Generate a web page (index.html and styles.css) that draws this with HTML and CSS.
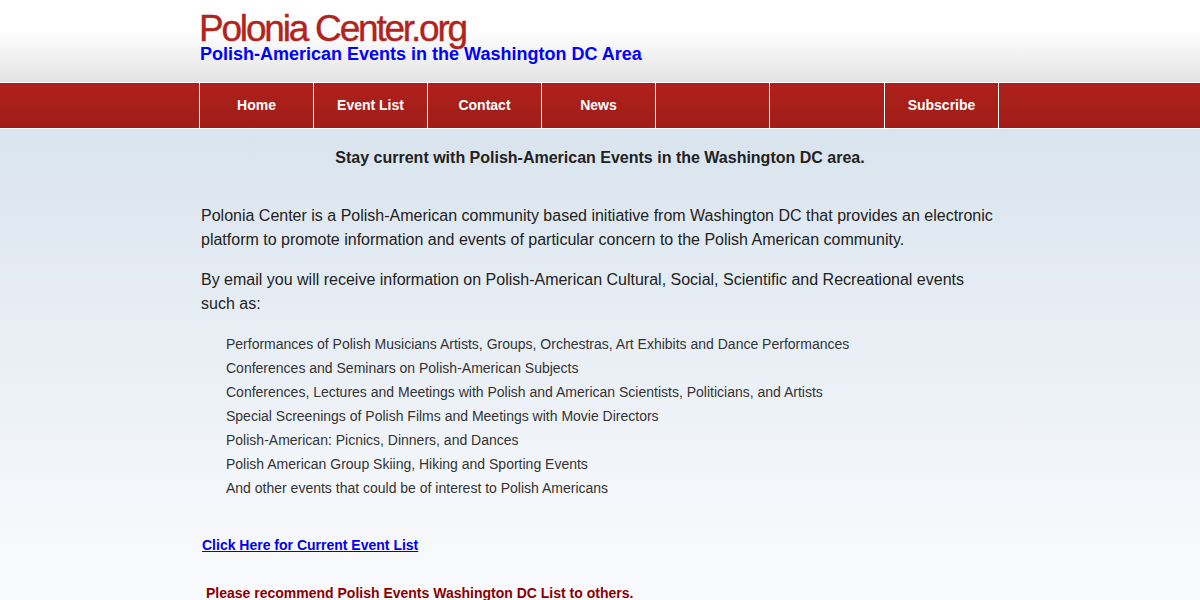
FILE: index.html
```html
<!DOCTYPE html>
<html lang="en">
<head>
<meta charset="utf-8">
<title>Polonia Center.org</title>
<link rel="stylesheet" href="styles.css">
</head>
<body>
<header class="site-header">
  <div class="wrap">
    <div class="logo">Polonia Center.org</div>
    <div class="tagline">Polish-American Events in the Washington DC Area</div>
  </div>
</header>
<nav class="nav">
  <ul class="wrap nav-list">
    <li><a href="#">Home</a></li>
    <li><a href="#">Event List</a></li>
    <li><a href="#">Contact</a></li>
    <li><a href="#">News</a></li>
    <li><a href="#"></a></li>
    <li class="wide"><a href="#"></a></li>
    <li><a href="#">Subscribe</a></li>
  </ul>
</nav>
<main class="wrap content">
  <h2 class="lead">Stay current with Polish-American Events in the Washington DC area.</h2>
  <p class="intro">Polonia Center is a Polish-American community based initiative from Washington DC that provides an electronic platform to promote information and events of particular concern to the Polish American community.</p>
  <p class="intro">By email you will receive information on Polish-American Cultural, Social, Scientific and Recreational events such as:</p>
  <ul class="events">
    <li>Performances of Polish Musicians Artists, Groups, Orchestras, Art Exhibits and Dance Performances</li>
    <li>Conferences and Seminars on Polish-American Subjects</li>
    <li>Conferences, Lectures and Meetings with Polish and American Scientists, Politicians, and Artists</li>
    <li>Special Screenings of Polish Films and Meetings with Movie Directors</li>
    <li>Polish-American: Picnics, Dinners, and Dances</li>
    <li>Polish American Group Skiing, Hiking and Sporting Events</li>
    <li>And other events that could be of interest to Polish Americans</li>
  </ul>
  <p class="cta"><a href="#">Click Here for Current Event List</a></p>
  <p class="recommend">Please recommend Polish Events Washington DC List to others.</p>
</main>
</body>
</html>
```
FILE: styles.css
```css
* { box-sizing: border-box; }
html, body { margin: 0; padding: 0; }
body {
  font-family: "Liberation Sans", Arial, sans-serif;
  background: linear-gradient(to bottom, #ffffff 0px, #ffffff 30px, #e3e3e3 82px, #d9e4ee 128px, #f8f9fc 560px, #f9fafc 100%) no-repeat;
  background-color: #f9fafc;
  min-height: 600px;
}
.wrap {
  width: 800px;
  margin: 0 auto;
}
.site-header {
  height: 82px;
}
.site-header .wrap {
  padding-top: 10px;
}
.logo {
  font-size: 37px;
  line-height: 38px;
  letter-spacing: -2.2px;
  color: #b1231d;
  margin-left: -1px;
  -webkit-text-stroke: 0.4px #b1231d;
}
.tagline {
  position: relative;
  font-size: 18px;
  font-weight: bold;
  line-height: 16px;
  color: #0000ff;
  margin-top: -2px;
}
.nav {
  border-top: 1px solid #ffffff;
  border-bottom: 1px solid #ffffff;
  background: linear-gradient(to bottom, #ae201b, #a21d18);
  height: 47px;
}
.nav-list {
  list-style: none;
  padding: 0;
  display: flex;
  height: 45px;
  margin: 0 auto;
  transform: translateX(-1px);
}
.nav-list li {
  width: 114px;
  border-left: 1px solid #ffffff;
  display: flex;
  align-items: center;
  justify-content: center;
  padding-bottom: 2px;
}
.nav-list li.wide {
  width: 115px;
}
.nav-list li:last-child {
  border-right: 1px solid #ffffff;
  width: 115px;
}
.nav-list a {
  color: #ffffff;
  font-weight: bold;
  font-size: 14px;
  text-decoration: none;
}
.content {
  color: #222222;
}
.lead {
  margin: 17px 0 0;
  font-size: 16px;
  line-height: 24px;
  text-align: center;
  color: #222222;
}
.intro {
  margin: 34px 0 0;
  font-size: 16px;
  line-height: 24px;
  padding-left: 1px;
}
.intro + .intro {
  margin-top: 16px;
}
.events {
  list-style: none;
  margin: 16px 0 0;
  padding: 0 0 0 26px;
  font-size: 14px;
  line-height: 24px;
  color: #333333;
}
.cta {
  margin: 33px 0 0;
  font-size: 14px;
  line-height: 24px;
  font-weight: bold;
  padding-left: 2px;
}
.cta a {
  color: #0000ee;
  text-decoration: underline;
}
.recommend {
  margin: 24px 0 0;
  padding-left: 6px;
  font-size: 14px;
  line-height: 24px;
  font-weight: bold;
  color: #8b0000;
}
```
